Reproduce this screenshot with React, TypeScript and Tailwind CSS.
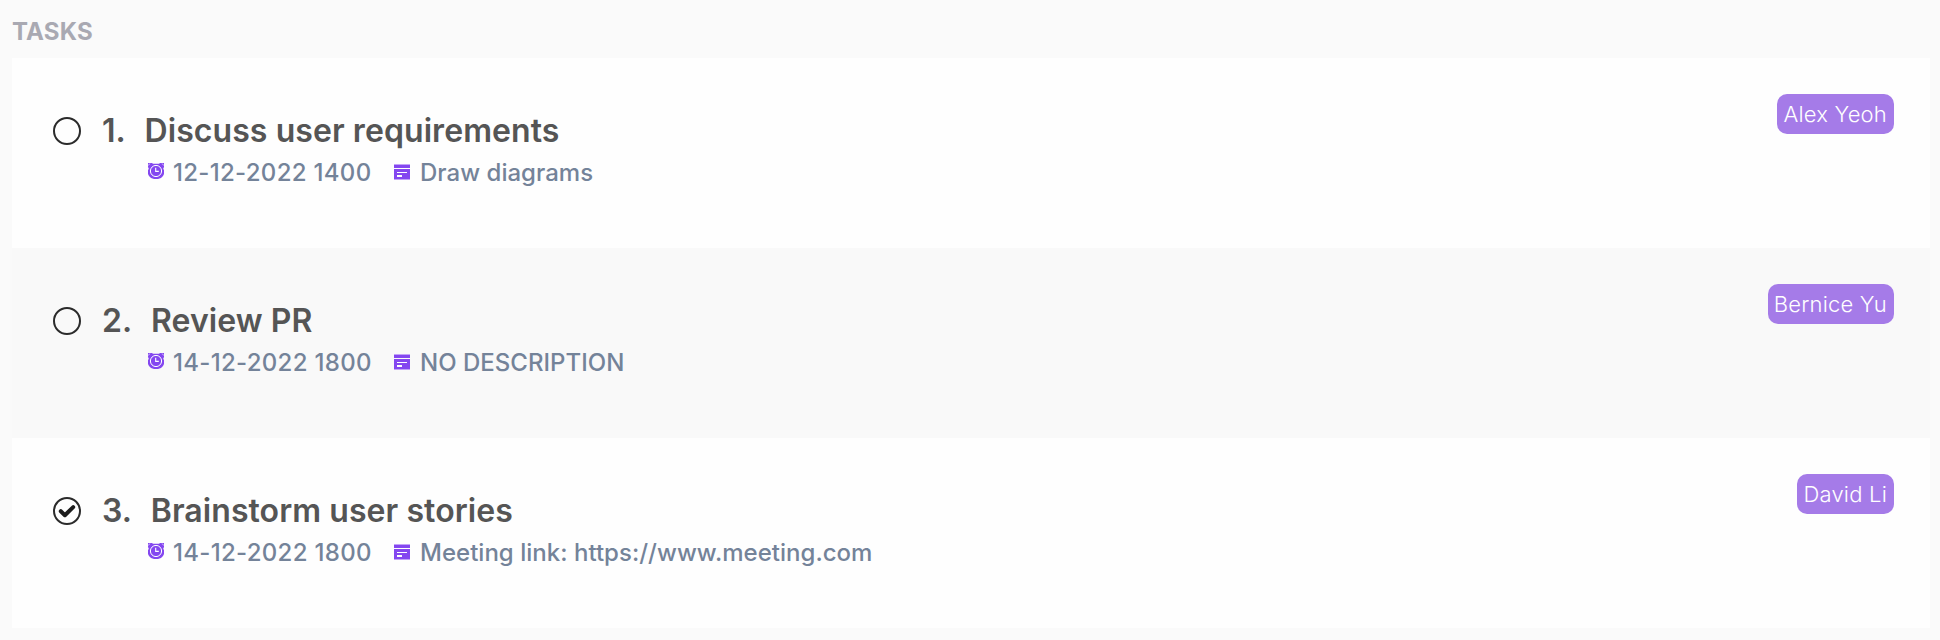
type Task = {
  index: number;
  title: string;
  deadline: string;
  description: string;
  assignee: string;
  done: boolean;
};

const tasks: Task[] = [
  { index: 1, title: "Discuss user requirements", deadline: "12-12-2022 1400", description: "Draw diagrams", assignee: "Alex Yeoh", done: false },
  { index: 2, title: "Review PR", deadline: "14-12-2022 1800", description: "NO DESCRIPTION", assignee: "Bernice Yu", done: false },
  { index: 3, title: "Brainstorm user stories", deadline: "14-12-2022 1800", description: "Meeting link: https://www.meeting.com", assignee: "David Li", done: true },
];

function StatusCircle({ done }: { done: boolean }) {
  return (
    <svg className="mt-[59px] size-7 shrink-0" viewBox="0 0 28 28" fill="none" stroke="#2b2b2b">
      <circle cx="14" cy="14" r="13" strokeWidth="2" />
      {done && <path d="M7.8 14.2 L11.9 18.2 L20.2 10.1" stroke="#1c1c1c" strokeWidth="4" strokeLinecap="round" strokeLinejoin="round" />}
    </svg>
  );
}

function ClockIcon() {
  return (
    <svg className="mt-1 size-4 shrink-0" viewBox="0 0 16 16" fill="none">
      <path d="M0 0H4L5 .7H11L12 0H16V4L15.3 5.5V6L16 7V11L15 13L13 15L10 16H6L3 15L1 13L0 11V7L.7 6V5.5L0 4Z" fill="#8447f0" />
      <circle cx="8" cy="8" r="5.6" stroke="#fff" strokeWidth="1" />
      <path d="M7.7 4.7V8.4H10.8" stroke="#fff" strokeWidth="1.1" />
      <path d="M0 2.4L2.2 .6M16 2.4L13.8 .6" stroke="#fff" strokeWidth=".6" />
    </svg>
  );
}

function DescriptionIcon() {
  return (
    <svg className="mt-[5px] size-4 shrink-0" viewBox="0 0 16 16">
      <path d="M0 0H16V4H0ZM0 5H16V16H0Z" fill="#8447f0" />
      <path d="M0 0H16V1H0ZM0 15H16V16H0Z" fill="#fff" opacity=".5" />
      <path d="M3 8H13V9H3ZM3 11H8V13H3Z" fill="#fff" />
    </svg>
  );
}

function TaskRow({ task }: { task: Task }) {
  return (
    <li className="flex h-[190px] items-start bg-[#fefefe] pl-[41px] pr-9 even:bg-[#f9f9f9]">
      <StatusCircle done={task.done} />
      <div className="ml-[21px] flex-1 pt-[53px]">
        <h2 className="flex h-10 items-center whitespace-nowrap text-[32px] font-semibold leading-10 tracking-[0.07px] text-[#555]">
          <span className="mr-[18.7px]">{task.index}.</span>
          <span>{task.title}</span>
        </h2>
        <div className="ml-[46px] mt-2 flex h-7 items-start whitespace-nowrap text-2xl font-medium leading-7 text-[#748399]">
          <ClockIcon />
          <span className="ml-[9px] w-[221px] tracking-[0.3px]">{task.deadline}</span>
          <DescriptionIcon />
          <span className="ml-2.5 tracking-[0.02px]">{task.description}</span>
        </div>
      </div>
      <span className="mt-9 flex h-10 items-center whitespace-nowrap rounded-[10px] bg-[#a57be8] pl-1.5 pr-[7px] text-[22px] font-light tracking-[0.2px] text-white">
        {task.assignee}
      </span>
    </li>
  );
}

export default function App() {
  return (
    <main className="h-[640px] overflow-hidden bg-[#fafafa] pl-3 pr-2.5 font-['Inter',sans-serif]">
      <h1 className="flex h-[58px] items-center pt-1.5 text-2xl font-bold leading-6 tracking-[0.2px] text-[#a9a9b2]">TASKS</h1>
      <ul>
        {tasks.map((task) => (
          <TaskRow key={task.index} task={task} />
        ))}
      </ul>
    </main>
  );
}
